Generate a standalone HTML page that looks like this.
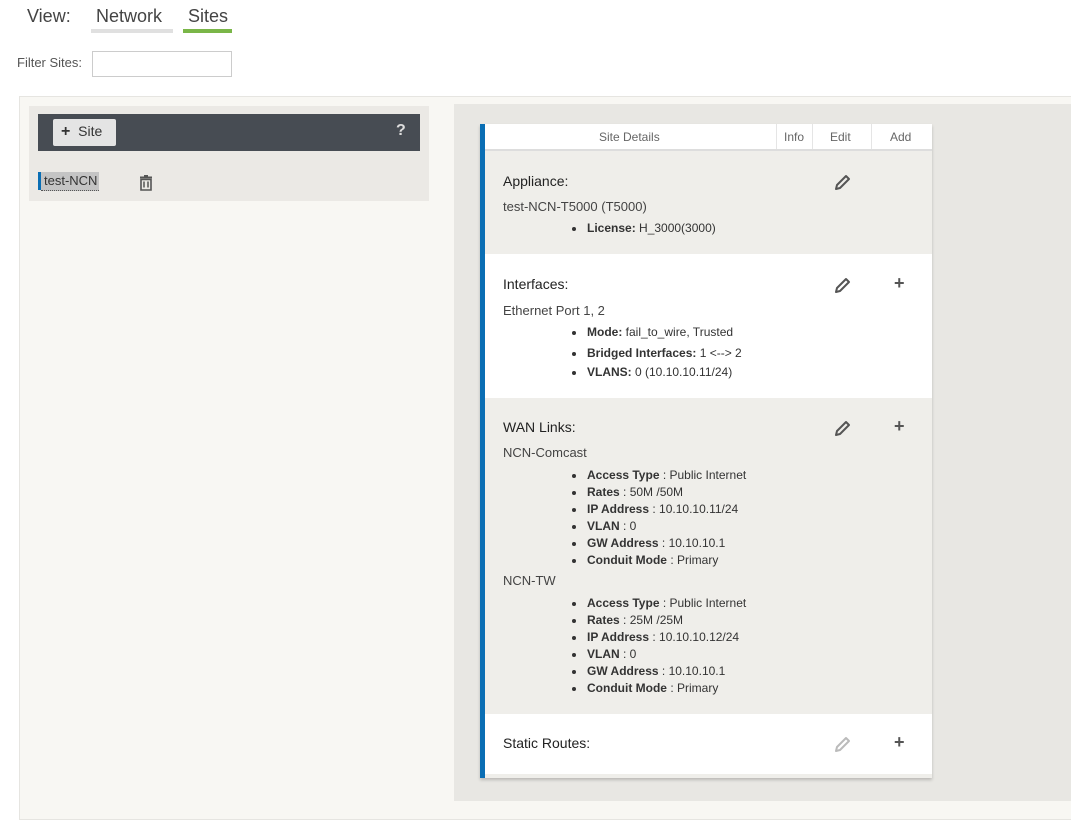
<!DOCTYPE html>
<html><head><style>
*{margin:0;padding:0;box-sizing:border-box}
body{width:1071px;height:821px;background:#fff;font-family:"Liberation Sans",sans-serif;color:#333;position:relative;overflow:hidden}
.a{position:absolute}
.t{font-size:13px;color:#444}
.sec{position:absolute;left:5px;right:0}
ul{list-style:none}
li{position:absolute;left:102px;font-size:12px;color:#333;white-space:nowrap}
li:before{content:"";position:absolute;left:-15px;top:6px;width:4px;height:4px;border-radius:2px;background:#333}
li b{font-weight:bold}
h4{position:absolute;left:18px;font-size:14px;font-weight:normal;color:#222}
</style></head><body>
<div class="a" style="left:27px;top:6px;font-size:18px;color:#444">View:</div>
<div class="a" style="left:96px;top:6px;font-size:18px;color:#444">Network</div>
<div class="a" style="left:91px;top:29px;width:82px;height:4px;background:#e0e0e0"></div>
<div class="a" style="left:188px;top:6px;font-size:18px;color:#444">Sites</div>
<div class="a" style="left:183px;top:29px;width:49px;height:4px;background:#7ab648"></div>
<div class="a" style="left:17px;top:55px;font-size:13px;color:#555">Filter Sites:</div>
<div class="a" style="left:92px;top:51px;width:140px;height:26px;border:1px solid #ccc;background:#fff"></div>

<div class="a" style="left:19px;top:96px;width:1060px;height:724px;background:#f8f7f3;border:1px solid #e6e5e1"></div>
<div class="a" style="left:29px;top:106px;width:400px;height:95px;background:#ebe9e5"></div>
<div class="a" style="left:38px;top:114px;width:382px;height:37px;background:#474c53"></div>
<div class="a" style="left:53px;top:119px;width:63px;height:27px;background:#e4e4e4;border-radius:2px;font-size:14px;color:#333;padding:4px 0 0 8px"><b style="font-size:16px">+</b>&nbsp; Site</div>
<div class="a" style="left:396px;top:122px;font-size:16px;font-weight:bold;color:#ddd">?</div>
<div class="a" style="left:38px;top:172px;width:3px;height:18px;background:#0a6eb4"></div>
<div class="a" style="left:41px;top:172px;height:19px;background:#c4c4c4;font-size:13px;color:#333;padding:1px 2px 0 3px;border-bottom:1px dotted #555">test-NCN</div>
<svg class="a" style="left:139px;top:175px" width="14" height="16" viewBox="0 0 14 16"><rect x="1" y="1.5" width="12" height="2" fill="#555"/><rect x="5" y="0" width="4" height="2" fill="#555"/><path d="M2 4.5h10v10.5H2z" fill="none" stroke="#555" stroke-width="1.6"/><path d="M5 6.5v6M9 6.5v6" stroke="#555" stroke-width="1.5"/></svg>

<div class="a" style="left:454px;top:104px;width:617px;height:697px;background:#e8e7e3"></div>
<div class="a" style="left:480px;top:124px;width:452px;height:654px;background:#efeeea;box-shadow:0 2px 3px rgba(0,0,0,.2);border-left:5px solid #0a6eb4">
 <div class="sec" style="left:0;top:0;height:27px;background:#fff;border-bottom:2px solid #ddd;font-size:12px;color:#666">
  <span class="a" style="left:114px;top:6px">Site Details</span>
  <span class="a" style="left:291px;top:0;width:37px;height:25px;border-left:1px solid #e5e5e5;border-right:1px solid #e5e5e5;padding:6px 0 0 7px">Info</span>
  <span class="a" style="left:328px;top:0;width:59px;height:25px;border-right:1px solid #e5e5e5;padding:6px 0 0 17px">Edit</span>
  <span class="a" style="left:405px;top:6px">Add</span>
 </div>
 <div class="sec" style="left:0;top:27px;height:103px">
  <h4 style="top:22px">Appliance:</h4>
  <div class="t a" style="left:18px;top:48px">test-NCN-T5000 (T5000)</div>
  <ul><li style="top:70px"><b>License:</b> H_3000(3000)</li></ul>
 </div>
 <div class="sec" style="left:0;top:130px;height:144px;background:#fff">
  <h4 style="top:22px">Interfaces:</h4>
  <div class="t a" style="left:18px;top:49px">Ethernet Port 1, 2</div>
  <ul><li style="top:71px"><b>Mode:</b> fail_to_wire, Trusted</li><li style="top:92px"><b>Bridged Interfaces:</b> 1 &lt;--&gt; 2</li><li style="top:111px"><b>VLANS:</b> 0 (10.10.10.11/24)</li></ul>
 </div>
 <div class="sec" style="left:0;top:274px;height:316px">
  <h4 style="top:21px">WAN Links:</h4>
  <div class="t a" style="left:18px;top:47px">NCN-Comcast</div>
  <ul>
  <li style="top:70px"><b>Access Type</b> : Public Internet</li>
  <li style="top:87px"><b>Rates</b> : 50M /50M</li>
  <li style="top:104px"><b>IP Address</b> : 10.10.10.11/24</li>
  <li style="top:121px"><b>VLAN</b> : 0</li>
  <li style="top:138px"><b>GW Address</b> : 10.10.10.1</li>
  <li style="top:155px"><b>Conduit Mode</b> : Primary</li></ul>
  <div class="t a" style="left:18px;top:175px">NCN-TW</div>
  <ul>
  <li style="top:198px"><b>Access Type</b> : Public Internet</li>
  <li style="top:215px"><b>Rates</b> : 25M /25M</li>
  <li style="top:232px"><b>IP Address</b> : 10.10.10.12/24</li>
  <li style="top:249px"><b>VLAN</b> : 0</li>
  <li style="top:266px"><b>GW Address</b> : 10.10.10.1</li>
  <li style="top:283px"><b>Conduit Mode</b> : Primary</li></ul>
 </div>
 <div class="sec" style="left:0;top:590px;height:60px;background:#fff">
  <h4 style="top:21px">Static Routes:</h4>
 </div>
</div>
<svg class="a" style="left:834px;top:174px" width="17" height="17" viewBox="0 0 17 17"><path d="M3 11L12 2l3 3-9 9-4 1z" fill="none" stroke="#555" stroke-width="2" stroke-linejoin="round"/></svg>
<svg class="a" style="left:834px;top:277px" width="17" height="17" viewBox="0 0 17 17"><path d="M3 11L12 2l3 3-9 9-4 1z" fill="none" stroke="#555" stroke-width="2" stroke-linejoin="round"/></svg>
<svg class="a" style="left:834px;top:420px" width="17" height="17" viewBox="0 0 17 17"><path d="M3 11L12 2l3 3-9 9-4 1z" fill="none" stroke="#555" stroke-width="2" stroke-linejoin="round"/></svg>
<svg class="a" style="left:834px;top:736px" width="17" height="17" viewBox="0 0 17 17"><path d="M3 11L12 2l3 3-9 9-4 1z" fill="none" stroke="#bbb" stroke-width="2" stroke-linejoin="round"/></svg>
<div class="a" style="left:894px;top:273px;font-size:18px;font-weight:bold;color:#555">+</div>
<div class="a" style="left:894px;top:416px;font-size:18px;font-weight:bold;color:#555">+</div>
<div class="a" style="left:894px;top:732px;font-size:18px;font-weight:bold;color:#555">+</div>
</body></html>
